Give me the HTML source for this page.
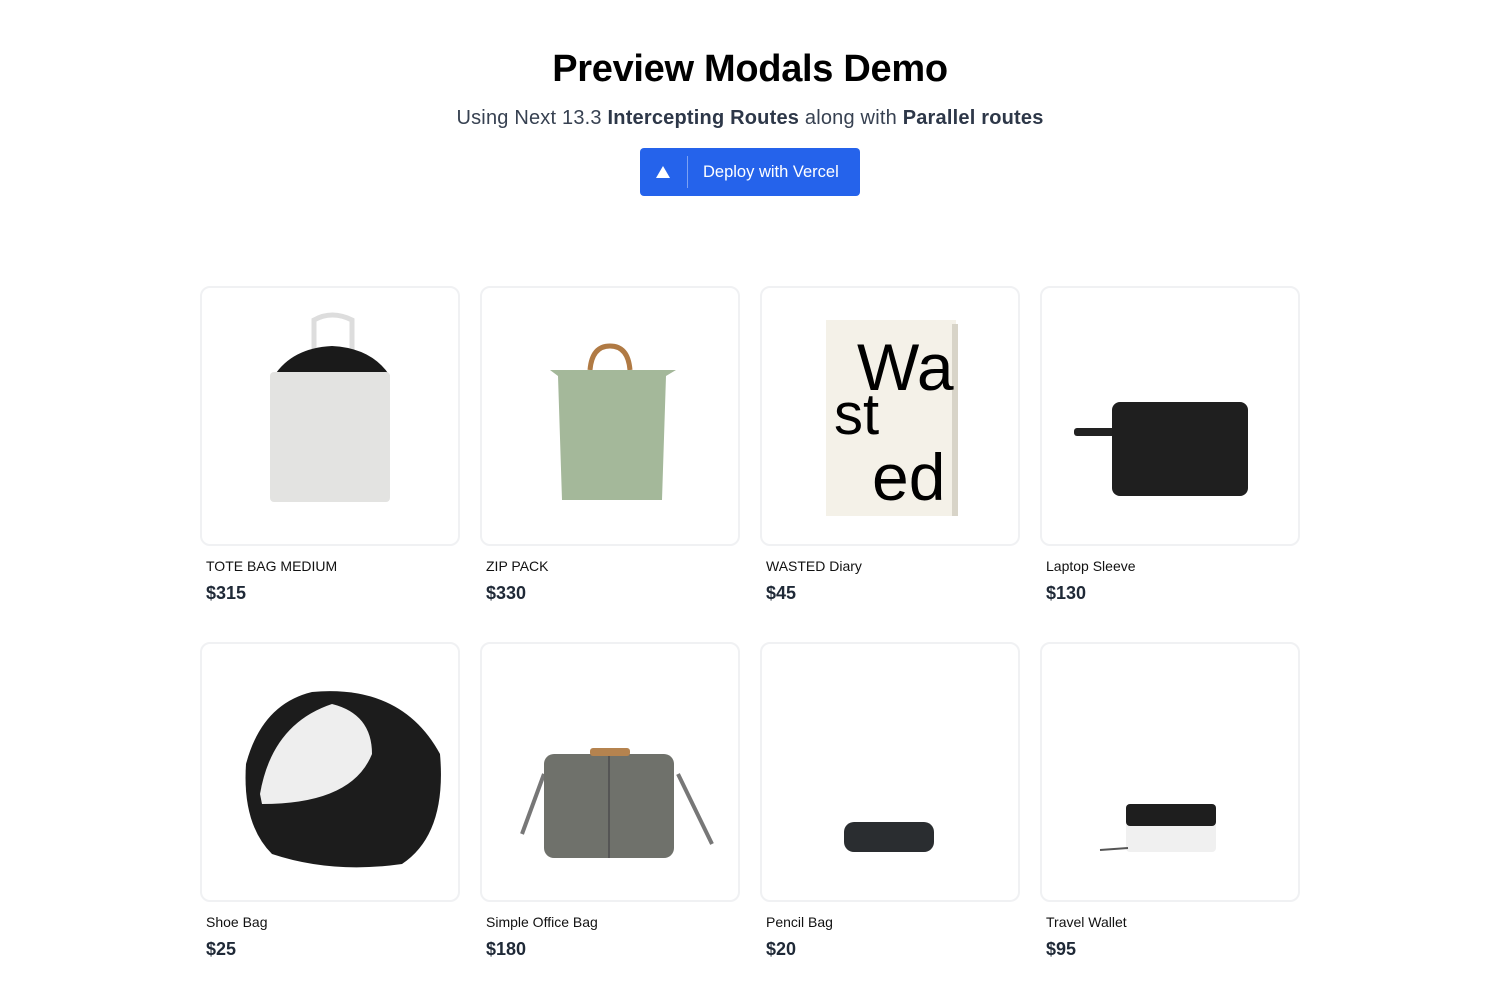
<!DOCTYPE html>
<html><head><meta charset="utf-8"><style>
body{margin:0;background:#fff;font-family:"Liberation Sans",Arial,sans-serif;width:1500px;height:1000px;overflow:hidden}
h1{position:absolute;top:48px;left:0;width:1500px;text-align:center;margin:0;font-size:38px;font-weight:700;color:#000;letter-spacing:-0.3px}
.sub{position:absolute;top:107px;left:0;width:1500px;text-align:center;font-size:20px;color:#374151;letter-spacing:0.2px}
.sub b{color:#2d3748}
.btn{position:absolute;left:640px;top:148px;width:220px;height:48px;background:#2563eb;border-radius:4px;color:#fff}
.btn .tri{position:absolute;left:16px;top:18px;width:0;height:0;border-left:7px solid transparent;border-right:7px solid transparent;border-bottom:12px solid #fff}
.btn .sep{position:absolute;left:47px;top:8px;width:1px;height:32px;background:rgba(255,255,255,.4)}
.btn .t{position:absolute;left:63px;top:15px;font-size:16.5px}
.card{position:absolute;width:256px;height:256px;border:2px solid #f0f1f3;border-radius:10px;background:#fff;overflow:hidden}
.name{position:absolute;font-size:14px;color:#111}
.price{position:absolute;font-size:18px;font-weight:700;color:#1f2937}
</style></head><body>
<h1>Preview Modals Demo</h1>
<div class="sub">Using Next 13.3 <b>Intercepting Routes</b> along with <b>Parallel routes</b></div>
<div class="btn"><div class="tri"></div><div class="sep"></div><div class="t">Deploy with Vercel</div></div>

<div class="card" style="left:200px;top:286px"><svg width="256" height="256"><path d="M112 90 V32 Q130 22 150 32 V90" stroke="#ddd" stroke-width="5" fill="none"/><path d="M72 88 Q90 60 130 58 Q170 60 188 88Z" fill="#1a1a1a"/><rect x="68" y="84" width="120" height="130" rx="4" fill="#e3e3e1"/></svg></div>
<div class="card" style="left:480px;top:286px"><svg width="256" height="256"><path d="M108 82 Q110 58 128 58 Q146 58 148 82" stroke="#b07a44" stroke-width="5" fill="none"/><path d="M68 82 H194 L184 88 L180 212 H80 L76 88Z" fill="#a4b89a"/></svg></div>
<div class="card" style="left:760px;top:286px"><svg width="256" height="256"><rect x="64" y="32" width="130" height="196" fill="#f4f1e8"/><rect x="190" y="36" width="6" height="192" fill="#d8d4c8"/><text x="95" y="102" font-size="66" font-family="Liberation Sans">Wa</text><text x="72" y="146" font-size="58" font-family="Liberation Sans">st</text><text x="110" y="212" font-size="66" font-family="Liberation Sans">ed</text></svg></div>
<div class="card" style="left:1040px;top:286px"><svg width="256" height="256"><rect x="32" y="140" width="44" height="8" rx="3" fill="#222"/><rect x="70" y="114" width="136" height="94" rx="8" fill="#1f1f1f"/></svg></div>

<div class="name" style="left:206px;top:558px">TOTE BAG MEDIUM</div><div class="price" style="left:206px;top:583px">$315</div>
<div class="name" style="left:486px;top:558px">ZIP PACK</div><div class="price" style="left:486px;top:583px">$330</div>
<div class="name" style="left:766px;top:558px">WASTED Diary</div><div class="price" style="left:766px;top:583px">$45</div>
<div class="name" style="left:1046px;top:558px">Laptop Sleeve</div><div class="price" style="left:1046px;top:583px">$130</div>

<div class="card" style="left:200px;top:642px"><svg width="256" height="256"><path d="M44 120 Q60 60 110 48 Q200 40 238 110 Q245 190 200 220 Q130 230 70 210 Q40 180 44 120Z" fill="#1c1c1c"/><path d="M58 150 Q70 80 130 60 Q170 70 170 110 Q150 160 60 160Z" fill="#eee"/></svg></div>
<div class="card" style="left:480px;top:642px"><svg width="256" height="256"><path d="M40 190 L62 130" stroke="#777" stroke-width="4"/><path d="M230 200 L196 130" stroke="#777" stroke-width="4"/><rect x="62" y="110" width="130" height="104" rx="10" fill="#6f716b"/><line x1="127" y1="110" x2="127" y2="214" stroke="#555" stroke-width="2"/><rect x="108" y="104" width="40" height="8" rx="3" fill="#b5834f"/></svg></div>
<div class="card" style="left:760px;top:642px"><svg width="256" height="256"><rect x="82" y="178" width="90" height="30" rx="10" fill="#2a2d30"/></svg></div>
<div class="card" style="left:1040px;top:642px"><svg width="256" height="256"><rect x="84" y="160" width="90" height="48" rx="4" fill="#f0f0f0"/><rect x="84" y="160" width="90" height="22" rx="4" fill="#1e1e1e"/><line x1="58" y1="206" x2="86" y2="204" stroke="#555" stroke-width="2"/></svg></div>

<div class="name" style="left:206px;top:914px">Shoe Bag</div><div class="price" style="left:206px;top:939px">$25</div>
<div class="name" style="left:486px;top:914px">Simple Office Bag</div><div class="price" style="left:486px;top:939px">$180</div>
<div class="name" style="left:766px;top:914px">Pencil Bag</div><div class="price" style="left:766px;top:939px">$20</div>
<div class="name" style="left:1046px;top:914px">Travel Wallet</div><div class="price" style="left:1046px;top:939px">$95</div>
</body></html>
